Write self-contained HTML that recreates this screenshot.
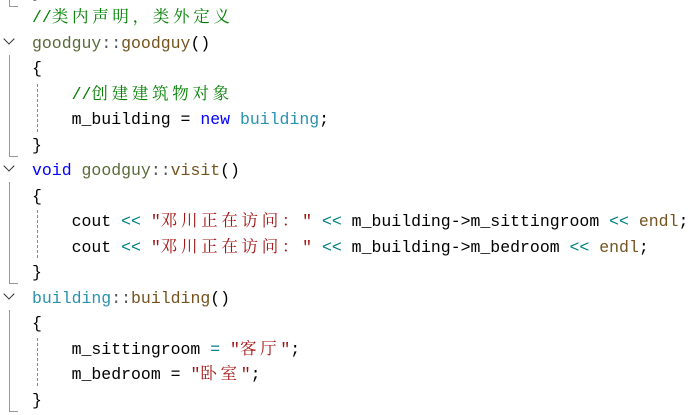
<!DOCTYPE html>
<html><head><meta charset="utf-8"><style>
body{margin:0;width:700px;height:415px;background:#fff;overflow:hidden;position:relative;font-family:"Liberation Mono","Noto Serif CJK SC",monospace;font-size:16.5px;color:#000}
.l{position:absolute;left:32px;white-space:pre;height:25.5px;line-height:25.5px}
.c{color:#008000}.f{color:#74531f}.t{color:#2b91af}.q{color:#5a6a3a}.k{color:#0000ff}.s{color:#a31515}.o{color:#008080}.g{color:#555}
.z{letter-spacing:3.7px}
.v{position:absolute;left:9px;width:1px;background:#999}
.h{position:absolute;left:9px;width:9px;height:1px;background:#999}
.d{position:absolute;left:37px;width:0;border-left:1px dashed #888}
.ch{position:absolute;left:5px;width:7px;height:7px;border-right:1px solid #333;border-bottom:1px solid #333;transform:rotate(45deg)}
</style></head><body>
<div class="v" style="top:0;height:6px"></div><div class="h" style="top:6px"></div>
<div class="l" style="top:-20px">}</div>
<div class="l c" style="top:5px">//<span class="z">类内声明，类外定义</span></div>
<div class="ch" style="top:35px"></div>
<div class="l" style="top:31px"><span class="q">goodguy</span><span class="g">::</span><span class="f">goodguy</span>()</div>
<div class="v" style="top:55px;height:101px"></div><div class="h" style="top:156px"></div>
<div class="l" style="top:56px">{</div>
<div class="d" style="top:84px;height:48px"></div>
<div class="l c" style="top:82px">    //<span class="z">创建建筑物对象</span></div>
<div class="l" style="top:107px">    m_building = <span class="k">new</span> <span class="t">building</span>;</div>
<div class="l" style="top:133px">}</div>
<div class="ch" style="top:162px"></div>
<div class="l" style="top:158px"><span class="k">void</span> <span class="q">goodguy</span><span class="g">::</span><span class="f">visit</span>()</div>
<div class="v" style="top:182px;height:101px"></div><div class="h" style="top:283px"></div>
<div class="l" style="top:184px">{</div>
<div class="d" style="top:210px;height:48px"></div>
<div class="l" style="top:209px">    cout <span class="o">&lt;&lt;</span> <span class="s">"<span class="z">邓川正在访问：</span>"</span> <span class="o">&lt;&lt;</span> m_building-&gt;m_sittingroom <span class="o">&lt;&lt;</span> <span class="f">endl</span>;</div>
<div class="l" style="top:235px">    cout <span class="o">&lt;&lt;</span> <span class="s">"<span class="z">邓川正在访问：</span>"</span> <span class="o">&lt;&lt;</span> m_building-&gt;m_bedroom <span class="o">&lt;&lt;</span> <span class="f">endl</span>;</div>
<div class="l" style="top:260px">}</div>
<div class="ch" style="top:290px"></div>
<div class="l" style="top:286px"><span class="t">building</span><span class="g">::</span><span class="f">building</span>()</div>
<div class="v" style="top:310px;height:101px"></div><div class="h" style="top:411px"></div>
<div class="l" style="top:311px">{</div>
<div class="d" style="top:338px;height:48px"></div>
<div class="l" style="top:337px">    m_sittingroom <span class="o">=</span> <span class="s">"<span class="z">客厅</span>"</span>;</div>
<div class="l" style="top:362px">    m_bedroom = <span class="s">"<span class="z">卧室</span>"</span>;</div>
<div class="l" style="top:388px">}</div>
</body></html>
